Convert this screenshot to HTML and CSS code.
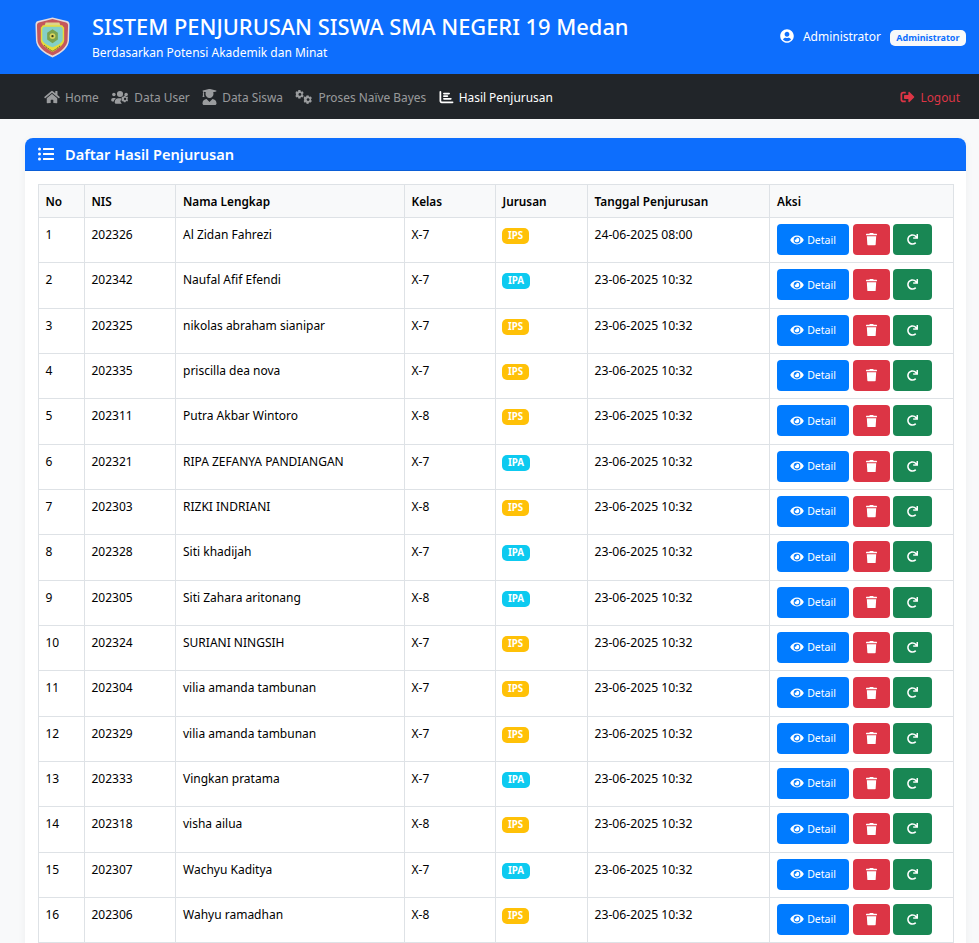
FILE: index.html
```html
<!DOCTYPE html>
<html lang="id">
<head>
    <meta charset="UTF-8">
    <meta name="viewport" content="width=device-width, initial-scale=1.0">
    <title>Hasil Penjurusan</title>
    <link rel="stylesheet" href="styles.css">
</head>
<body>
    <svg class="icon-defs" aria-hidden="true">
        <symbol id="i-home" viewBox="0 0 576 512"><path d="M280.37 148.26L96 300.11V464a16 16 0 0 0 16 16l112.06-.29a16 16 0 0 0 15.92-16V368a16 16 0 0 1 16-16h64a16 16 0 0 1 16 16v95.64a16 16 0 0 0 16 16.05L464 480a16 16 0 0 0 16-16V300L295.67 148.26a12.19 12.19 0 0 0-15.3 0zM571.6 251.47L488 182.56V44.05a12 12 0 0 0-12-12h-56a12 12 0 0 0-12 12v72.61L318.47 43a48 48 0 0 0-61 0L4.34 251.47a12 12 0 0 0-1.6 16.9l25.5 31A12 12 0 0 0 45.15 301l235.22-193.74a12.19 12.19 0 0 1 15.3 0L530.9 301a12 12 0 0 0 16.9-1.6l25.5-31a12 12 0 0 0-1.7-16.93z"/></symbol>
        <symbol id="i-gear" viewBox="-10 -10 276 276"><path d="M218 147c2-12 2-26 0-38l24-14c3-1.6 4-5 3-8-6-20-17-38-31-53-2-2.4-5.600-3-8.400-1.300l-24 14c-10-8.700-22-15.400-34.500-20V-1c0-3.200-2.200-6-5.300-6.600-20.800-4.700-42-4.500-61.800 0-3.100.6-5.300 3.400-5.300 6.600v27.700c-12.500 4.600-24.500 11.300-34.500 20l-24-14c-2.800-1.700-6.400-1.100-8.400 1.300-14 15-25 33-31 53-1 3 0 6.400 3 8l24 14c-2 12-2 26 0 38l-24 14c-3 1.600-4 5-3 8 6 20 17 38 31 53 2 2.400 5.600 3 8.400 1.300l24-14c10 8.700 22 15.400 34.500 20V257c0 3.200 2.200 6 5.300 6.600 20.800 4.700 42 4.500 61.800 0 3.100-.6 5.300-3.400 5.300-6.600v-27.700c12.500-4.600 24.500-11.300 34.500-20l24 14c2.800 1.700 6.400 1.100 8.400-1.300 14-15 25-33 31-53 1-3 0-6.400-3-8l-24-14zM128 173c-24.800 0-45-20.200-45-45s20.200-45 45-45 45 20.200 45 45-20.200 45-45 45z"/></symbol>
        <symbol id="i-users-cog" viewBox="0 0 640 512">
            <circle cx="96" cy="160" r="64"/>
            <circle cx="320" cy="144" r="112"/>
            <circle cx="544" cy="160" r="64"/>
            <path d="M0 352c0-35 29-64 64-64h64c18 0 34 7 45 19-41 22-70 62-77 110H32c-18 0-32-14-32-32z"/>
            <path d="M128 435c0-74 60-134 134-134h116c-7 20-10 42-6 62l-17 10c-20 12-26 36-15 56l32 55c5 8 11 14 18 18H160c-18 0-32-14-32-32z"/>
            <use href="#i-gear" x="376" y="200" width="260" height="260"/>
        </symbol>
        <symbol id="i-graduate" viewBox="0 0 448 512"><path d="M319.400 320.600L224 416l-95.400-95.400C57.100 323.700 0 382.200 0 454.400v9.600c0 26.500 21.500 48 48 48h352c26.500 0 48-21.500 48-48v-9.600c0-72.200-57.100-130.700-128.600-133.800zM13.600 79.800l6.400 1.500v58.400c-7 4.200-12 11.500-12 20.300 0 8.400 4.600 15.400 11.100 19.700L3.500 242c-1.700 6.900 2.100 14 7.600 14h41.800c5.500 0 9.300-7.100 7.600-14l-15.600-62.300C51.400 175.400 56 168.400 56 160c0-8.800-5-16.100-12-20.300V87.100l66 15.900c-8.600 17.200-14 36.400-14 57 0 70.700 57.300 128 128 128s128-57.300 128-128c0-20.600-5.300-39.800-14-57l96.300-23.200c18.200-4.400 18.200-27.100 0-31.500l-190.400-46c-13-3.100-26.700-3.100-39.700 0L13.600 48.200c-18.100 4.400-18.100 27.200 0 31.600z"/></symbol>
        <symbol id="i-cogs" viewBox="0 0 640 512">
            <use href="#i-gear" x="10" y="0" width="320" height="320"/>
            <use href="#i-gear" x="310" y="190" width="320" height="320"/>
        </symbol>
        <symbol id="i-chart" viewBox="0 0 512 512"><path d="M32 32c17.700 0 32 14.300 32 32V400c0 8.800 7.200 16 16 16H480c17.700 0 32 14.300 32 32s-14.300 32-32 32H80c-44.200 0-80-35.800-80-80V64C0 46.300 14.300 32 32 32zm96 96c0-17.700 14.300-32 32-32l192 0c17.700 0 32 14.300 32 32s-14.300 32-32 32l-192 0c-17.700 0-32-14.300-32-32zm32 64H288c17.700 0 32 14.300 32 32s-14.300 32-32 32H160c-17.700 0-32-14.300-32-32s14.300-32 32-32zm0 96H416c17.700 0 32 14.300 32 32s-14.300 32-32 32H160c-17.700 0-32-14.300-32-32s14.300-32 32-32z"/></symbol>
        <symbol id="i-user" viewBox="0 0 496 512"><path d="M248 8C111 8 0 119 0 256s111 248 248 248 248-111 248-248S385 8 248 8zm0 96c48.600 0 88 39.400 88 88s-39.400 88-88 88-88-39.400-88-88 39.400-88 88-88zm0 344c-58.700 0-111.300-26.600-146.500-68.200 18.800-35.400 55.600-59.800 98.500-59.800 2.400 0 4.800.4 7.100 1.100 13 4.200 26.600 6.900 40.900 6.900 14.300 0 28-2.700 40.900-6.900 2.300-.7 4.700-1.100 7.100-1.100 42.900 0 79.700 24.400 98.500 59.800C359.300 421.400 306.700 448 248 448z"/></symbol>
        <symbol id="i-logout" viewBox="0 0 512 512"><path d="M497 273L329 441c-15 15-41 4.500-41-17v-96H152c-13.300 0-24-10.700-24-24v-96c0-13.300 10.700-24 24-24h136V88c0-21.400 25.900-32 41-17l168 168c9.300 9.400 9.300 24.600 0 34zM192 436v-40c0-6.600-5.400-12-12-12H96c-17.700 0-32-14.300-32-32V160c0-17.700 14.300-32 32-32h84c6.600 0 12-5.400 12-12V76c0-6.600-5.400-12-12-12H96c-53 0-96 43-96 96v192c0 53 43 96 96 96h84c6.600 0 12-5.400 12-12z"/></symbol>
        <symbol id="i-list" viewBox="0 0 512 512"><path d="M48 48a48 48 0 1 0 48 48 48 48 0 0 0-48-48zm0 160a48 48 0 1 0 48 48 48 48 0 0 0-48-48zm0 160a48 48 0 1 0 48 48 48 48 0 0 0-48-48zm448 16H176a16 16 0 0 0-16 16v32a16 16 0 0 0 16 16h320a16 16 0 0 0 16-16v-32a16 16 0 0 0-16-16zm0-320H176a16 16 0 0 0-16 16v32a16 16 0 0 0 16 16h320a16 16 0 0 0 16-16V80a16 16 0 0 0-16-16zm0 160H176a16 16 0 0 0-16 16v32a16 16 0 0 0 16 16h320a16 16 0 0 0 16-16v-32a16 16 0 0 0-16-16z"/></symbol>
        <symbol id="i-eye" viewBox="0 0 576 512"><path d="M572.520 241.400C518.290 135.590 410.930 64 288 64S57.680 135.640 3.480 241.410a32.350 32.350 0 0 0 0 29.190C57.710 376.410 165.070 448 288 448s230.320-71.640 284.520-177.41a32.350 32.350 0 0 0 0-29.190zM288 400a144 144 0 1 1 144-144 143.930 143.930 0 0 1-144 144zm0-240a95.310 95.310 0 0 0-25.310 3.790 47.850 47.850 0 0 1-66.900 66.900A95.780 95.780 0 1 0 288 160z"/></symbol>
        <symbol id="i-trash" viewBox="0 0 448 512"><path d="M432 32H312l-9.400-18.700A24 24 0 0 0 281.100 0H166.800a23.720 23.720 0 0 0-21.400 13.300L136 32H16A16 16 0 0 0 0 48v32a16 16 0 0 0 16 16h416a16 16 0 0 0 16-16V48a16 16 0 0 0-16-16zM53.200 467a48 48 0 0 0 47.900 45h245.800a48 48 0 0 0 47.900-45L416 128H32z"/></symbol>
        <symbol id="i-redo" viewBox="0 0 512 512"><path d="M500.330 0h-47.410a12 12 0 0 0-12 12.570l4 82.760A247.420 247.420 0 0 0 256 8C119.340 8 7.900 119.530 8 256.190 8.100 393.070 119.100 504 256 504a247.100 247.100 0 0 0 166.180-63.910 12 12 0 0 0 .48-17.430l-34-34a12 12 0 0 0-16.380-.55A176 176 0 1 1 402.100 157.800l-101.530-4.870a12 12 0 0 0-12.570 12v47.410a12 12 0 0 0 12 12h200.330a12 12 0 0 0 12-12V12a12 12 0 0 0-12-12z"/></symbol>
    </svg>

    <header class="topbar">
        <div class="brand">
            <svg class="logo" viewBox="0 0 36 42" aria-hidden="true">
                <path d="M18 .5 L33 4 C35 4.500 35.500 6 35.500 8 L35 24 C34.500 31 28 37 18 41.500 C8 37 1.500 31 1 24 L.5 8 C.5 6 1 4.500 3 4 Z" fill="#e6dcdc"/>
                <path d="M18 2 L32 5.500 C33.500 6 34 7 34 9 L33.500 24 C33 30 27 35.500 18 39.500 C9 35.500 3 30 2.500 24 L2 9 C2 7 2.500 6 4 5.500 Z" fill="#c4575c"/>
                <path d="M11 5.500 H25 L26.500 9.500 H9.500 Z" fill="#ddd58a"/>
                <path d="M8 8.500 H28 L30 11 V24 C29.500 28 26 31 18 36 C10 31 6.500 28 6 24 V11 Z" fill="#e6dc3a"/>
                <path d="M9 10 H27 L28.500 12 V23 C28 26.500 24 28.500 18 31 C12 28.500 8 26.500 7.500 23 V12 Z" fill="#84cfc6"/>
                <path d="M18 12.500 L23.500 16 V23 L18 27 L12.500 23 V16 Z" fill="#7aa24e"/>
                <circle cx="18" cy="19.500" r="3" fill="#d8d45c"/>
                <circle cx="18" cy="19.500" r="1.200" fill="#2f3a22"/>
                <path d="M9.500 29 C13 32 15 33.500 18 35 C21 33.500 23 32 26.500 29" fill="none" stroke="#55552c" stroke-width="1" stroke-dasharray="1.500 .8"/>
            </svg>
            <div>
                <h1 class="brand-title">SISTEM PENJURUSAN SISWA SMA NEGERI 19 Medan</h1>
                <p class="brand-sub">Berdasarkan Potensi Akademik dan Minat</p>
            </div>
        </div>
        <div class="user-box">
            <svg class="user-icon"><use href="#i-user"/></svg>
            <span class="user-name">Administrator</span>
            <span class="role-badge">Administrator</span>
        </div>
    </header>

    <nav class="navbar">
        <ul class="nav-list">
            <li><a class="nav-link" href="#"><svg class="nav-icon w-home"><use href="#i-home"/></svg>Home</a></li>
            <li><a class="nav-link" href="#"><svg class="nav-icon w-wide"><use href="#i-users-cog"/></svg>Data User</a></li>
            <li><a class="nav-link" href="#"><svg class="nav-icon w-grad"><use href="#i-graduate"/></svg>Data Siswa</a></li>
            <li><a class="nav-link" href="#"><svg class="nav-icon w-wide"><use href="#i-cogs"/></svg>Proses Naïve Bayes</a></li>
            <li><a class="nav-link active" href="#"><svg class="nav-icon w-chart"><use href="#i-chart"/></svg>Hasil Penjurusan</a></li>
        </ul>
        <a class="nav-link logout" href="#"><svg class="nav-icon w-chart"><use href="#i-logout"/></svg>Logout</a>
    </nav>

    <main class="content">
        <section class="card">
            <div class="card-header">
                <svg class="list-icon"><use href="#i-list"/></svg>
                <h2>Daftar Hasil Penjurusan</h2>
            </div>
            <div class="card-body">
                <table class="result-table">
                    <colgroup>
                        <col class="col-no">
                        <col class="col-nis">
                        <col class="col-nama">
                        <col class="col-kelas">
                        <col class="col-jurusan">
                        <col class="col-tanggal">
                        <col class="col-aksi">
                    </colgroup>
                    <thead>
                        <tr>
                            <th>No</th><th>NIS</th><th>Nama Lengkap</th><th>Kelas</th><th>Jurusan</th><th>Tanggal Penjurusan</th><th>Aksi</th>
                        </tr>
                    </thead>
                    <tbody>
                        <tr><td>1</td><td>202326</td><td>Al Zidan Fahrezi</td><td>X-7</td><td><span class="tag ips">IPS</span></td><td>24-06-2025 08:00</td><td><div class="actions"><a class="btn btn-detail" href="#"><svg class="eye"><use href="#i-eye"/></svg>Detail</a><a class="btn btn-del" href="#"><svg class="trash"><use href="#i-trash"/></svg></a><a class="btn btn-redo" href="#"><svg class="redo"><use href="#i-redo"/></svg></a></div></td></tr>
                        <tr><td>2</td><td>202342</td><td>Naufal Afif Efendi</td><td>X-7</td><td><span class="tag ipa">IPA</span></td><td>23-06-2025 10:32</td><td><div class="actions"><a class="btn btn-detail" href="#"><svg class="eye"><use href="#i-eye"/></svg>Detail</a><a class="btn btn-del" href="#"><svg class="trash"><use href="#i-trash"/></svg></a><a class="btn btn-redo" href="#"><svg class="redo"><use href="#i-redo"/></svg></a></div></td></tr>
                        <tr><td>3</td><td>202325</td><td>nikolas abraham sianipar</td><td>X-7</td><td><span class="tag ips">IPS</span></td><td>23-06-2025 10:32</td><td><div class="actions"><a class="btn btn-detail" href="#"><svg class="eye"><use href="#i-eye"/></svg>Detail</a><a class="btn btn-del" href="#"><svg class="trash"><use href="#i-trash"/></svg></a><a class="btn btn-redo" href="#"><svg class="redo"><use href="#i-redo"/></svg></a></div></td></tr>
                        <tr><td>4</td><td>202335</td><td>priscilla dea nova</td><td>X-7</td><td><span class="tag ips">IPS</span></td><td>23-06-2025 10:32</td><td><div class="actions"><a class="btn btn-detail" href="#"><svg class="eye"><use href="#i-eye"/></svg>Detail</a><a class="btn btn-del" href="#"><svg class="trash"><use href="#i-trash"/></svg></a><a class="btn btn-redo" href="#"><svg class="redo"><use href="#i-redo"/></svg></a></div></td></tr>
                        <tr><td>5</td><td>202311</td><td>Putra Akbar Wintoro</td><td>X-8</td><td><span class="tag ips">IPS</span></td><td>23-06-2025 10:32</td><td><div class="actions"><a class="btn btn-detail" href="#"><svg class="eye"><use href="#i-eye"/></svg>Detail</a><a class="btn btn-del" href="#"><svg class="trash"><use href="#i-trash"/></svg></a><a class="btn btn-redo" href="#"><svg class="redo"><use href="#i-redo"/></svg></a></div></td></tr>
                        <tr><td>6</td><td>202321</td><td>RIPA ZEFANYA PANDIANGAN</td><td>X-7</td><td><span class="tag ipa">IPA</span></td><td>23-06-2025 10:32</td><td><div class="actions"><a class="btn btn-detail" href="#"><svg class="eye"><use href="#i-eye"/></svg>Detail</a><a class="btn btn-del" href="#"><svg class="trash"><use href="#i-trash"/></svg></a><a class="btn btn-redo" href="#"><svg class="redo"><use href="#i-redo"/></svg></a></div></td></tr>
                        <tr><td>7</td><td>202303</td><td>RIZKI INDRIANI</td><td>X-8</td><td><span class="tag ips">IPS</span></td><td>23-06-2025 10:32</td><td><div class="actions"><a class="btn btn-detail" href="#"><svg class="eye"><use href="#i-eye"/></svg>Detail</a><a class="btn btn-del" href="#"><svg class="trash"><use href="#i-trash"/></svg></a><a class="btn btn-redo" href="#"><svg class="redo"><use href="#i-redo"/></svg></a></div></td></tr>
                        <tr><td>8</td><td>202328</td><td>Siti khadijah</td><td>X-7</td><td><span class="tag ipa">IPA</span></td><td>23-06-2025 10:32</td><td><div class="actions"><a class="btn btn-detail" href="#"><svg class="eye"><use href="#i-eye"/></svg>Detail</a><a class="btn btn-del" href="#"><svg class="trash"><use href="#i-trash"/></svg></a><a class="btn btn-redo" href="#"><svg class="redo"><use href="#i-redo"/></svg></a></div></td></tr>
                        <tr><td>9</td><td>202305</td><td>Siti Zahara aritonang</td><td>X-8</td><td><span class="tag ipa">IPA</span></td><td>23-06-2025 10:32</td><td><div class="actions"><a class="btn btn-detail" href="#"><svg class="eye"><use href="#i-eye"/></svg>Detail</a><a class="btn btn-del" href="#"><svg class="trash"><use href="#i-trash"/></svg></a><a class="btn btn-redo" href="#"><svg class="redo"><use href="#i-redo"/></svg></a></div></td></tr>
                        <tr><td>10</td><td>202324</td><td>SURIANI NINGSIH</td><td>X-7</td><td><span class="tag ips">IPS</span></td><td>23-06-2025 10:32</td><td><div class="actions"><a class="btn btn-detail" href="#"><svg class="eye"><use href="#i-eye"/></svg>Detail</a><a class="btn btn-del" href="#"><svg class="trash"><use href="#i-trash"/></svg></a><a class="btn btn-redo" href="#"><svg class="redo"><use href="#i-redo"/></svg></a></div></td></tr>
                        <tr><td>11</td><td>202304</td><td>vilia amanda tambunan</td><td>X-7</td><td><span class="tag ips">IPS</span></td><td>23-06-2025 10:32</td><td><div class="actions"><a class="btn btn-detail" href="#"><svg class="eye"><use href="#i-eye"/></svg>Detail</a><a class="btn btn-del" href="#"><svg class="trash"><use href="#i-trash"/></svg></a><a class="btn btn-redo" href="#"><svg class="redo"><use href="#i-redo"/></svg></a></div></td></tr>
                        <tr><td>12</td><td>202329</td><td>vilia amanda tambunan</td><td>X-7</td><td><span class="tag ips">IPS</span></td><td>23-06-2025 10:32</td><td><div class="actions"><a class="btn btn-detail" href="#"><svg class="eye"><use href="#i-eye"/></svg>Detail</a><a class="btn btn-del" href="#"><svg class="trash"><use href="#i-trash"/></svg></a><a class="btn btn-redo" href="#"><svg class="redo"><use href="#i-redo"/></svg></a></div></td></tr>
                        <tr><td>13</td><td>202333</td><td>Vingkan pratama</td><td>X-7</td><td><span class="tag ipa">IPA</span></td><td>23-06-2025 10:32</td><td><div class="actions"><a class="btn btn-detail" href="#"><svg class="eye"><use href="#i-eye"/></svg>Detail</a><a class="btn btn-del" href="#"><svg class="trash"><use href="#i-trash"/></svg></a><a class="btn btn-redo" href="#"><svg class="redo"><use href="#i-redo"/></svg></a></div></td></tr>
                        <tr><td>14</td><td>202318</td><td>visha ailua</td><td>X-8</td><td><span class="tag ips">IPS</span></td><td>23-06-2025 10:32</td><td><div class="actions"><a class="btn btn-detail" href="#"><svg class="eye"><use href="#i-eye"/></svg>Detail</a><a class="btn btn-del" href="#"><svg class="trash"><use href="#i-trash"/></svg></a><a class="btn btn-redo" href="#"><svg class="redo"><use href="#i-redo"/></svg></a></div></td></tr>
                        <tr><td>15</td><td>202307</td><td>Wachyu Kaditya</td><td>X-7</td><td><span class="tag ipa">IPA</span></td><td>23-06-2025 10:32</td><td><div class="actions"><a class="btn btn-detail" href="#"><svg class="eye"><use href="#i-eye"/></svg>Detail</a><a class="btn btn-del" href="#"><svg class="trash"><use href="#i-trash"/></svg></a><a class="btn btn-redo" href="#"><svg class="redo"><use href="#i-redo"/></svg></a></div></td></tr>
                        <tr><td>16</td><td>202306</td><td>Wahyu ramadhan</td><td>X-8</td><td><span class="tag ips">IPS</span></td><td>23-06-2025 10:32</td><td><div class="actions"><a class="btn btn-detail" href="#"><svg class="eye"><use href="#i-eye"/></svg>Detail</a><a class="btn btn-del" href="#"><svg class="trash"><use href="#i-trash"/></svg></a><a class="btn btn-redo" href="#"><svg class="redo"><use href="#i-redo"/></svg></a></div></td></tr>
                    </tbody>
                </table>
            </div>
        </section>
    </main>
</body>
</html>
```

FILE: styles.css
```css
html, body {
    height: 943px;
    overflow: hidden;
}
body {
    margin: 0;
    font-family: "Noto Sans", "Open Sans", sans-serif;
    font-size: 13px;
    color: #212529;
    background-color: #f8f9fa;
}
svg {
    fill: currentColor;
    display: block;
    flex: none;
}
.icon-defs {
    display: none;
}

/* header */
.topbar {
    height: 74px;
    box-sizing: border-box;
    padding: 0 13px 0 35px;
    display: flex;
    justify-content: space-between;
    align-items: center;
    background-color: #0d6efd;
    color: #fff;
}
.brand {
    display: flex;
    align-items: center;
    gap: 22px;
}
.logo {
    width: 35px;
    height: 41px;
}
.brand-title {
    margin: 0 0 3px;
    font-size: 21.850px;
    font-weight: 500;
    line-height: 28px;
}
.brand-sub {
    margin: 0;
    font-size: 12px;
    line-height: 18px;
}
.user-box {
    display: flex;
    align-items: center;
    margin-bottom: 2px;
}
.user-icon {
    width: 14px;
    height: 14px;
    margin-right: 9px;
}
.user-name {
    font-size: 12px;
    margin-right: 9px;
}
.role-badge {
    margin-top: 3px;
    background-color: #f8f9fa;
    color: #0d6efd;
    font-size: 9px;
    font-weight: 700;
    line-height: 10px;
    padding: 3px 6.500px;
    border-radius: 5px;
}

/* nav */
.navbar {
    height: 45px;
    box-sizing: border-box;
    padding: 0 19px 0 44px;
    display: flex;
    justify-content: space-between;
    align-items: center;
    background-color: #212529;
}
.nav-list {
    list-style: none;
    margin: 0;
    padding: 0;
    display: flex;
    gap: 12.500px;
}
.nav-link {
    display: flex;
    align-items: center;
    gap: 5px;
    font-size: 11.900px;
    color: rgba(255, 255, 255, 0.55);
    text-decoration: none;
}
.nav-link.active {
    color: #fff;
}
.nav-link.logout {
    color: #dc3545;
}
.nav-icon {
    height: 14px;
}
.w-home { width: 16px; }
.w-wide { width: 18px; }
.w-grad { width: 15px; height: 16px; }
.w-chart { width: 15px; }

/* card */
.content {
    padding: 19px 13px 0 25px;
}
.card {
    background-color: #fff;
    border-radius: 8px;
    box-shadow: 0 2px 8px rgba(0, 0, 0, 0.05);
}
.card-header {
    height: 33px;
    box-sizing: border-box;
    padding: 0 13px;
    display: flex;
    align-items: center;
    gap: 11px;
    color: #fff;
    background-color: #0d6efd;
    border-bottom: 1px solid #0b5ed7;
    border-radius: 8px 8px 0 0;
}
.card-header h2 {
    margin: 0;
    font-size: 14.600px;
    font-weight: 600;
}
.list-icon {
    width: 16px;
    height: 16px;
}
.card-body {
    padding: 13px;
}

/* table */
.result-table {
    width: 915px;
    table-layout: fixed;
    border-collapse: collapse;
    font-size: 12px;
    color: #000;
}
.col-no { width: 46px; }
.col-nis { width: 91px; }
.col-nama { width: 229px; }
.col-kelas { width: 91px; }
.col-jurusan { width: 92px; }
.col-tanggal { width: 182px; }
.col-aksi { width: 184px; }
.result-table th,
.result-table td {
    border: 1px solid #dee2e6;
    padding: 8px 6.500px 6px;
    text-align: left;
    vertical-align: top;
    line-height: 18px;
}
.result-table th:nth-child(3),
.result-table td:nth-child(3),
.result-table th:nth-child(7),
.result-table td:nth-child(7) {
    padding-left: 7px;
}
.result-table td:nth-child(6) {
    font-size: 12.200px;
}
.result-table td:nth-child(7) {
    padding-top: 6px;
}
.result-table thead tr {
    height: 33px;
}
.result-table th {
    padding-top: 7px;
    font-size: 11.800px;
    font-weight: 600;
    background-color: #f8f9fa;
}
.result-table tbody tr {
    height: 45.340px;
}
.tag {
    display: inline-block;
    margin: 2px 0 0 -0.500px;
    padding: 0 6px;
    font-size: 9.750px;
    font-weight: 700;
    line-height: 16px;
    border-radius: 5px;
    color: #fff;
    vertical-align: top;
}
.tag.ips { background-color: #ffc107; }
.tag.ipa { background-color: #0dcaf0; }

/* buttons */
.actions {
    display: flex;
    gap: 3.500px;
}
.btn {
    height: 31px;
    box-sizing: border-box;
    display: flex;
    align-items: center;
    justify-content: center;
    border-radius: 4px;
    color: #fff;
    text-decoration: none;
    font-size: 10.500px;
}
.btn-detail {
    width: 72px;
    gap: 3px;
    background-color: #007bff;
}
.btn-del {
    width: 37px;
    background-color: #dc3545;
}
.btn-redo {
    width: 39px;
    background-color: #198754;
}
.eye {
    width: 14px;
    height: 12px;
}
.trash {
    width: 11px;
    height: 12.500px;
}
.redo {
    width: 11px;
    height: 11px;
}
```
